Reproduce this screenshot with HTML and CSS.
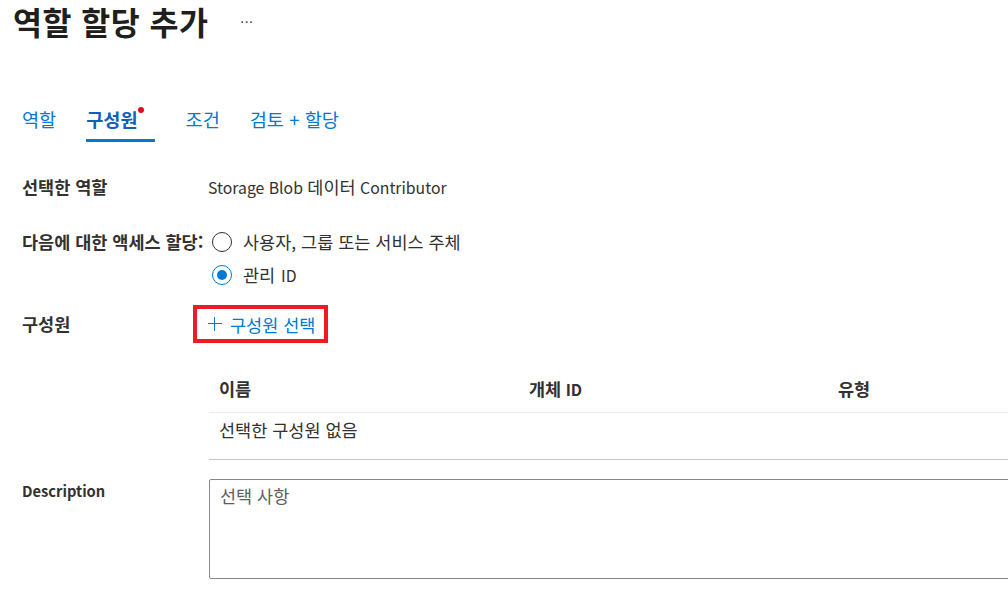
FILE: index.html
```html
<!DOCTYPE html>
<html lang="ko">
<head>
<meta charset="utf-8">
<title>역할 할당 추가</title>
<link rel="stylesheet" href="styles.css">
</head>
<body>
<header class="title-bar">
  <h1 class="title">역할 할당 추가</h1>
  <span class="more">···</span>
</header>

<nav class="tabs">
  <a class="tab">역할</a>
  <a class="tab active">구성원<span class="dot"></span></a>
  <a class="tab">조건</a>
  <a class="tab">검토 + 할당</a>
</nav>

<main class="form">
  <div class="row row-role">
    <div class="label">선택한 역할</div>
    <div class="value"><span class="en">Storage Blob </span>데이터<span class="en"> Contributor</span></div>
  </div>

  <div class="row row-access">
    <div class="label">다음에 대한 액세스 할당:</div>
    <div class="radios">
      <label class="radio"><span class="circle"></span><span class="radio-text">사용자, 그룹 또는 서비스 주체</span></label>
      <label class="radio checked"><span class="circle"></span><span class="radio-text">관리 <span class="en id">ID</span></span></label>
    </div>
  </div>

  <div class="row row-members">
    <div class="label">구성원</div>
    <div class="highlight">
      <button class="add-btn"><span class="plus"></span>구성원 선택</button>
    </div>
  </div>

  <div class="table-wrap">
    <div class="table">
      <div class="thead">
        <div class="th c1">이름</div>
        <div class="th c2">개체<span class="en"> ID</span></div>
        <div class="th c3">유형</div>
      </div>
      <div class="tbody">
        <div class="td">선택한 구성원 없음</div>
      </div>
    </div>
  </div>

  <div class="row row-desc">
    <div class="label"><span class="en">Description</span></div>
    <div class="textarea">선택 사항</div>
  </div>
</main>
</body>
</html>
```

FILE: styles.css
```css
html, body {
  margin: 0;
  padding: 0;
  background: #ffffff;
  overflow: hidden;
}
body {
  width: 1008px;
  height: 599px;
  font-family: "Noto Sans CJK KR", "Open Sans", sans-serif;
  color: #323130;
  font-size: 17.5px;
}
.en {
  font-size: 15.8px;
}
.label .en {
  font-size: 14.7px;
}

.title-bar {
  display: flex;
  align-items: center;
  height: 44px;
  padding-left: 13px;
}
.title {
  margin: 0;
  font-size: 31.5px;
  font-weight: 700;
  letter-spacing: 0.5px;
  line-height: 44px;
  color: #201f1e;
  padding-bottom: 2px;
}
.more {
  margin-left: 32px;
  font-size: 12px;
  color: #323130;
  letter-spacing: 1px;
  padding-bottom: 2px;
}

.tabs {
  display: flex;
  margin-top: 55px;
  padding-left: 22px;
  height: 43px;
}
.tab {
  position: relative;
  color: #0078d4;
  font-size: 18.6px;
  line-height: 40px;
  margin-right: 30px;
}
.tab.active {
  font-weight: 700;
  color: #1160b8;
  padding-right: 17px;
  margin-right: 31px;
}
.tab.active::after {
  content: "";
  position: absolute;
  left: 0;
  right: 0;
  bottom: 0;
  height: 3px;
  background: #0078d4;
}
.dot {
  position: absolute;
  top: 8px;
  right: 11px;
  width: 6px;
  height: 6px;
  border-radius: 50%;
  background: #e00b1c;
}

.form {
  padding-left: 22px;
}
.row {
  display: flex;
  align-items: flex-start;
}
.label {
  width: 186px;
  flex: none;
  font-weight: 700;
  line-height: 24px;
}
.value {
  line-height: 24px;
}
.row-role {
  margin-top: 33px;
}
.row-access {
  margin-top: 30px;
}
.row-access .label {
  width: 188px;
  white-space: nowrap;
}
.radios {
  display: flex;
  flex-direction: column;
  gap: 12px;
  padding-top: 1px;
}
.radio {
  display: flex;
  align-items: center;
  gap: 11px;
  height: 21px;
}
.radio-text {
  line-height: 21px;
  height: 21px;
}
.radio .id {
  line-height: 1;
  margin-left: 1px;
}
.circle {
  width: 18px;
  height: 18px;
  border: 1.5px solid #323130;
  border-radius: 50%;
  box-sizing: content-box;
  position: relative;
  margin-left: 2px;
}
.radio.checked .circle {
  border-color: #0078d4;
}
.radio.checked .circle::after {
  content: "";
  position: absolute;
  left: 4px;
  top: 4px;
  width: 10px;
  height: 10px;
  border-radius: 50%;
  background: #0078d4;
}

.row-members {
  margin-top: 20px;
  align-items: center;
}
.row-members .label {
  width: 171px;
}
.highlight {
  border: 4px solid #ed1c24;
  padding: 0 9px 0 11px;
  height: 30px;
  display: flex;
  align-items: center;
}
.add-btn {
  border: none;
  background: none;
  padding: 0;
  font-family: inherit;
  font-size: 17.5px;
  color: #0078d4;
  display: flex;
  align-items: center;
}
.plus {
  position: relative;
  width: 14px;
  height: 14px;
  margin-right: 8px;
}
.plus::before,
.plus::after {
  content: "";
  position: absolute;
  background: #0078d4;
}
.plus::before {
  left: 0;
  right: 0;
  top: 6px;
  height: 1.3px;
}
.plus::after {
  top: 0;
  bottom: 0;
  left: 6px;
  width: 1.3px;
}

.table-wrap {
  margin-top: 22px;
  padding-left: 187px;
}
.table {
  width: 820px;
}
.thead {
  display: flex;
  height: 47px;
  align-items: center;
  border-bottom: 1px solid #edebe9;
  font-weight: 700;
}
.th.c1 { width: 310px; padding-left: 10px; }
.th.c2 { width: 309px; }
.th.c3 { flex: 1; }
.tbody {
  height: 46px;
  border-bottom: 1px solid #c8c6c4;
}
.td {
  padding-left: 10px;
  line-height: 34px;
}

.row-desc {
  margin-top: 19px;
}
.row-desc .label {
  margin-top: -1px;
  width: 187px;
}
.textarea {
  width: 820px;
  border: 1px solid #8a8886;
  border-radius: 2px;
  padding: 4px 10px;
  box-sizing: border-box;
  height: 100px;
  color: #605e5c;
  line-height: 24px;
  flex: none;
}
```
